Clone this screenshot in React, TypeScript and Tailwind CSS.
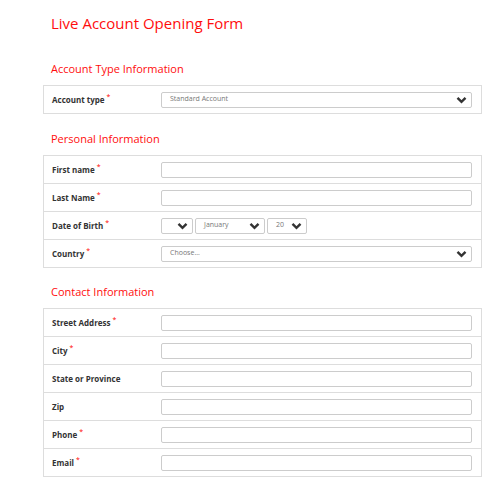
import React from "react";

const Chevron = () => (
  <svg width="11" height="8" viewBox="0 0 11 8" className="shrink-0">
    <path d="M1.5 1.8 L5.5 5.8 L9.5 1.8" fill="none" stroke="#333" strokeWidth="2.4" strokeLinejoin="miter" />
  </svg>
);

function Label({ text, req }: { text: string; req?: boolean }) {
  return (
    <div className="w-[108px] shrink-0 pl-[8px] text-[8px] font-bold text-[#333]">
      {text}
      {req && <sup className="ml-[2px] text-[7px] font-normal text-[#ff0000]">*</sup>}
    </div>
  );
}

function TextInput() {
  return <div className="h-[16px] flex-1 rounded-[2px] border border-[#ccc] bg-white" />;
}

function Select({ value, className }: { value: string; className: string }) {
  return (
    <div
      className={`flex h-[16px] items-center justify-between rounded-[2px] border border-[#ccc] bg-white pl-[8px] pr-[4px] text-[7px] text-[#777] ${className}`}
    >
      <span>{value}</span>
      <Chevron />
    </div>
  );
}

function Row({ children, first }: { children: React.ReactNode; first?: boolean }) {
  return (
    <div className={`flex items-center ${first ? "h-[27px]" : "h-[28px] border-t border-[#ddd]"}`}>
      {children}
    </div>
  );
}

function Heading({ text, mt }: { text: string; mt: string }) {
  return <p className={`${mt} mb-[8px] pl-[8px] text-[11px] leading-[16px] text-[#ff0d0d]`}>{text}</p>;
}

export default function App() {
  const personal: { label: string; req?: boolean; kind: string }[] = [
    { label: "First name", req: true, kind: "text" },
    { label: "Last Name", req: true, kind: "text" },
    { label: "Date of Birth", req: true, kind: "dob" },
    { label: "Country", req: true, kind: "country" },
  ];
  const contact = [
    { label: "Street Address", req: true },
    { label: "City", req: true },
    { label: "State or Province" },
    { label: "Zip" },
    { label: "Phone", req: true },
    { label: "Email", req: true },
  ];

  return (
    <div className="min-h-[492px] w-[485px] bg-white pl-[43px] pr-[3px] font-['Open_Sans',sans-serif]">
      <h1 className="pl-[8px] pt-[13px] text-[15px] leading-[20px] text-[#ff0d0d]">Live Account Opening Form</h1>

      <Heading text="Account Type Information" mt="mt-[28px]" />
      <div className="border border-[#ddd]">
        <Row first>
          <Label text="Account type" req />
          <div className="flex flex-1 pl-[9px] pr-[9px]">
            <Select value="Standard Account" className="flex-1" />
          </div>
        </Row>
      </div>

      <Heading text="Personal Information" mt="mt-[17px]" />
      <div className="border border-[#ddd]">
        {personal.map((r, i) => (
          <Row key={r.label} first={i === 0}>
            <Label text={r.label} req={r.req} />
            <div className="flex flex-1 gap-[2px] pl-[9px] pr-[9px]">
              {r.kind === "text" && <TextInput />}
              {r.kind === "dob" && (
                <>
                  <Select value="" className="w-[32px]" />
                  <Select value="January" className="w-[70px]" />
                  <Select value="20" className="w-[40px]" />
                </>
              )}
              {r.kind === "country" && <Select value="Choose..." className="flex-1" />}
            </div>
          </Row>
        ))}
      </div>

      <Heading text="Contact Information" mt="mt-[16px]" />
      <div className="border border-[#ddd]">
        {contact.map((r, i) => (
          <Row key={r.label} first={i === 0}>
            <Label text={r.label} req={r.req} />
            <div className="flex flex-1 pl-[9px] pr-[9px]">
              <TextInput />
            </div>
          </Row>
        ))}
      </div>
    </div>
  );
}
